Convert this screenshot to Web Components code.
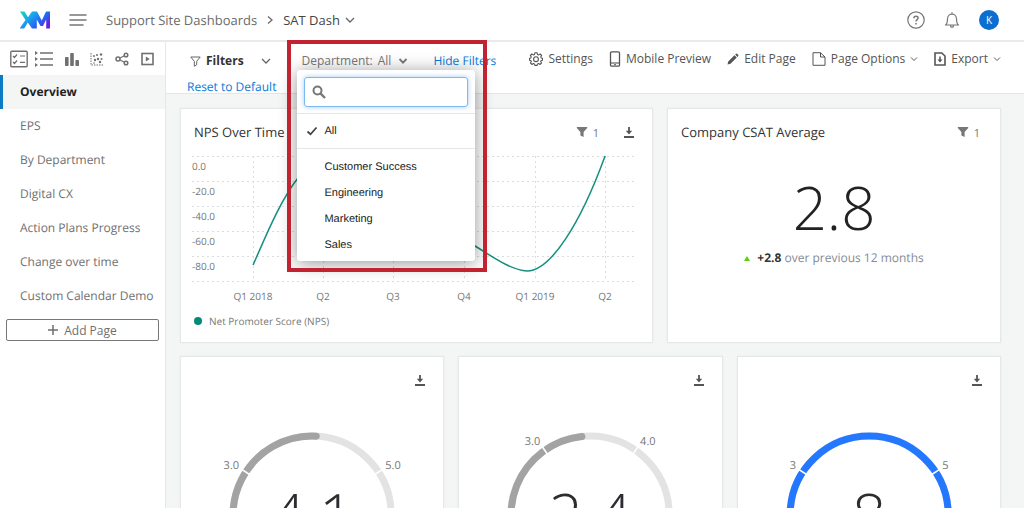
<!DOCTYPE html>
<html lang="en">
<head>
<meta charset="utf-8">
<meta name="viewport" content="width=device-width, initial-scale=1">
<title>SAT Dash</title>
<style>
  body { margin: 0; font-family: "Open Sans", sans-serif; font-size: 12px; color: #555; text-rendering: geometricPrecision; }
</style>
</head>
<body>
<dash-app></dash-app>

<template id="t-app">
  <style>
    :host { display: flex; flex-direction: column; height: 100vh; overflow: hidden; background: #f4f5f5; }
    .body { display: flex; flex: 1; min-height: 0; }
    main { flex: 1; min-width: 0; display: flex; flex-direction: column; }
    .cards { flex: 1; min-height: 0; overflow-y: auto; scrollbar-width: none; padding: 14px 23px 14px 14px; }
    .row { display: grid; gap: 14px; margin-bottom: 13px; }
    .wide { grid-template-columns: 17fr 12fr; }
    .three { grid-template-columns: repeat(3, 1fr); }
  </style>
  <dash-header></dash-header>
  <div class="body">
    <dash-sidebar></dash-sidebar>
    <main>
      <dash-toolbar></dash-toolbar>
      <div class="cards">
        <div class="row wide">
          <dash-card heading="NPS Over Time" filters="1" download><nps-chart></nps-chart></dash-card>
          <dash-card heading="Company CSAT Average" filters="1"><dash-metric></dash-metric></dash-card>
        </div>
        <div class="row three">
          <dash-card download><dash-gauge value="4.1" low="3.0" high="5.0" tick="57" end="3" color="#a3a3a3"></dash-gauge></dash-card>
          <dash-card download><dash-gauge value="2.4" low="3.0" high="4.0" tick="35" end="-6" color="#a3a3a3"></dash-gauge></dash-card>
          <dash-card download><dash-gauge value="8" low="3" high="5" tick="57" end="130" color="#2478ff"></dash-gauge></dash-card>
        </div>
      </div>
    </main>
  </div>
</template>

<template id="t-header">
  <style>
    :host { display: flex; align-items: center; height: 40px; padding: 0 25px 0 20px; background: #fff; border-bottom: 2px solid #e9eaea; flex: none; }
    .logo { display: block; width: 30px; height: 18px; margin-right: 19px; }
    button { border: 0; background: none; padding: 0; font: inherit; color: #777; display: flex; align-items: center; }
    nav { display: flex; align-items: center; margin-left: 19px; font-size: 13px; color: #6b6b6b; }
    nav a { color: inherit; text-decoration: none; }
    nav dash-icon { margin: 0 9px; }
    nav button { color: #444; }
    nav button dash-icon { margin: 0 0 0 5px; color: #666; }
    .right { margin-left: auto; display: flex; align-items: center; gap: 18px; }
    .avatar { width: 20px; height: 20px; border-radius: 50%; background: #0b6ed0; color: #fff; font-size: 10px; justify-content: center; }
  </style>
  <svg class="logo" viewBox="0 0 30 18" role="img" aria-label="XM">
    <defs><linearGradient id="g" x1="0" y1="0" x2="1" y2=".6">
      <stop offset="0" stop-color="#21dbaa"/><stop offset=".4" stop-color="#1aa6ee"/><stop offset=".75" stop-color="#2266f0"/><stop offset="1" stop-color="#6a1fe0"/>
    </linearGradient></defs>
    <path fill="url(#g)" d="M0 .5H4.500L8 6.300 12 .5H17L21.800 9.500 26 .5H30V17.500H26.200V8.500L23 15H20.500L16.800 8.500V17.500H12L7.800 11.500 4.200 17.500H-.5L5.500 9Z"/>
  </svg>
  <button aria-label="Menu"><dash-icon name="menu" w="18" h="14"></dash-icon></button>
  <nav aria-label="Breadcrumb">
    <a href="#">Support Site Dashboards</a>
    <dash-icon name="right" w="8" h="10"></dash-icon>
    <button>SAT Dash<dash-icon name="down" w="10" h="8"></dash-icon></button>
  </nav>
  <div class="right">
    <button aria-label="Help"><dash-icon name="help" w="18" h="18"></dash-icon></button>
    <button aria-label="Notifications"><dash-icon name="bell" w="18" h="18"></dash-icon></button>
    <button class="avatar" aria-label="Account">K</button>
  </div>
</template>

<template id="t-sidebar">
  <style>
    :host { display: block; width: 166px; flex: none; background: #fff; border-right: 1px solid #e6e7e7; box-sizing: border-box; color: #6f6f6f; }
    .tools { display: flex; align-items: center; justify-content: space-between; height: 33px; padding: 0 11px 0 10px; color: #707070; }
    .tools button { border: 0; background: none; padding: 0; color: inherit; display: flex; }
    .tools button:nth-child(2) { margin-left: -4px; }
    ul { list-style: none; margin: 0; padding: 0; }
    a { display: block; line-height: 34px; padding-left: 20px; color: inherit; text-decoration: none; }
    a[aria-current] { font-weight: 700; color: #222; background: #f4f5f5; border-left: 3px solid #0b7cc4; padding-left: 17px; }
    .add { display: flex; align-items: center; justify-content: center; gap: 6px; width: calc(100% - 12px); height: 22px; margin: 6px 6px 0; border: 1px solid #777; border-radius: 2px; background: #fff; font: inherit; color: inherit; padding: 0; }
  </style>
  <div class="tools">
    <button aria-label="Dashboards"><dash-icon name="checks" w="18" h="18"></dash-icon></button>
    <button aria-label="List"><dash-icon name="list" w="18" h="18"></dash-icon></button>
    <button aria-label="Bars"><dash-icon name="bars" w="16" h="16"></dash-icon></button>
    <button aria-label="Scatter"><dash-icon name="scatter" w="14" h="14"></dash-icon></button>
    <button aria-label="Share"><dash-icon name="share" w="14" h="14"></dash-icon></button>
    <button aria-label="Present"><dash-icon name="play" w="14" h="14"></dash-icon></button>
  </div>
  <nav><ul>
    <li><a href="#" aria-current="page">Overview</a></li>
    <li><a href="#">EPS</a></li>
    <li><a href="#">By Department</a></li>
    <li><a href="#">Digital CX</a></li>
    <li><a href="#">Action Plans Progress</a></li>
    <li><a href="#">Change over time</a></li>
    <li><a href="#">Custom Calendar Demo</a></li>
  </ul></nav>
  <button class="add"><dash-icon name="plus" w="10" h="10"></dash-icon>Add Page</button>
</template>

<template id="t-toolbar">
  <style>
    :host { display: flex; justify-content: space-between; height: 52px; padding: 6px 23px 0 21px; background: #fff; border-bottom: 1px solid #e4e5e5; box-sizing: border-box; position: relative; z-index: 1; flex: none; }
    button { border: 0; background: none; padding: 0; font: inherit; color: inherit; display: flex; align-items: center; white-space: nowrap; line-height: 26px; }
    .filters { display: grid; grid-template-columns: auto auto auto; column-gap: 25px; align-content: start; }
    .title { font-weight: 700; color: #333; }
    .title dash-icon { margin: 0 5px 0 3px; color: #666; }
    .title dash-icon:last-child { margin: 0 0 0 17px; }
    a { color: #0b78d8; text-decoration: none; line-height: 26px; white-space: nowrap; }
    .actions { display: flex; align-items: flex-start; gap: 16px; }
    .actions button { gap: 5px; line-height: 22px; }
  </style>
  <div class="filters">
    <button class="title"><dash-icon name="funnel" w="11" h="11"></dash-icon>Filters<dash-icon name="down" w="10" h="8"></dash-icon></button>
    <dash-filter></dash-filter>
    <a href="#">Hide Filters</a>
    <a href="#">Reset to Default</a>
  </div>
  <div class="actions">
    <button><dash-icon name="gear" w="14" h="14"></dash-icon>Settings</button>
    <button><dash-icon name="phone" w="12" h="16"></dash-icon>Mobile Preview</button>
    <button><dash-icon name="pencil" w="12" h="12"></dash-icon>Edit Page</button>
    <button><dash-icon name="page" w="14" h="14"></dash-icon>Page Options<dash-icon name="down" w="8" h="6"></dash-icon></button>
    <button><dash-icon name="export" w="12" h="14"></dash-icon>Export<dash-icon name="down" w="8" h="6"></dash-icon></button>
  </div>
</template>

<template id="t-filter">
  <style>
    :host { display: block; position: relative; color: #777; }
    .trigger { border: 0; background: none; padding: 0; font: inherit; color: inherit; display: flex; align-items: center; line-height: 26px; white-space: nowrap; }
    .trigger span { margin: 0 7px 0 5px; }
    .frame { position: absolute; left: -14px; top: -8px; width: 200px; height: 232px; box-sizing: border-box; border: 4px solid #c32230; pointer-events: none; }
    .menu { position: absolute; left: -4px; top: 22px; width: 178px; box-sizing: border-box; background: #fff; border-radius: 3px; box-shadow: 0 2px 18px rgba(0,0,0,.42); font-family: "Liberation Sans", Arial, sans-serif; font-size: 11px; color: #222; }
    .search { display: flex; align-items: center; gap: 6px; margin: 7px 7px 6px; height: 30px; box-sizing: border-box; padding: 0 7px; border: 1px solid #7db9ee; border-radius: 3px; box-shadow: 0 0 5px rgba(100,170,240,.6); color: #777; }
    input { flex: 1; min-width: 0; border: 0; outline: 0; background: none; font: inherit; padding: 0; }
    ul { list-style: none; margin: 0; padding: 4px 0; border-top: 1px solid #e6e6e6; }
    li { display: flex; align-items: center; padding-left: 27px; height: 26px; }
    .all li { padding-left: 9px; gap: 6px; }
    .rest { padding: 5px 0 3px; }
    .all dash-icon { color: #444; }
  </style>
  <button class="trigger" aria-haspopup="listbox" aria-expanded="true">Department: <span>All</span><dash-icon name="caret" w="10" h="8"></dash-icon></button>
  <div class="menu">
    <label class="search"><dash-icon name="search" w="14" h="14"></dash-icon><input type="text" aria-label="Search departments"></label>
    <ul class="all" role="listbox" aria-label="All departments"><li role="option" aria-selected="true"><dash-icon name="check" w="12" h="10"></dash-icon>All</li></ul>
    <ul class="rest" role="listbox" aria-label="Departments">
      <li role="option">Customer Success</li><li role="option">Engineering</li><li role="option">Marketing</li><li role="option">Sales</li>
    </ul>
  </div>
  <div class="frame"></div>
</template>

<template id="t-card">
  <style>
    :host { display: block; min-width: 0; background: #fff; border: 1px solid #e6e7e7; box-shadow: 0 0 2px rgba(0,0,0,.06); }
    header { display: flex; align-items: center; height: 46px; padding: 0 17px 0 13px; color: #777; }
    h2 { margin: 0; font-size: 13px; font-weight: 400; color: #333; flex: 1; white-space: nowrap; }
    .count, .dl { border: 0; background: none; padding: 0; font: inherit; font-size: 11px; color: inherit; display: flex; align-items: center; gap: 5px; }
    .count { margin-right: 3px; }
    .count + .dl { margin-left: 21px; }
    .dl { color: #555; }
  </style>
  <header><h2></h2></header>
  <slot></slot>
</template>

<template id="t-chart">
  <style>
    :host { display: block; padding-bottom: 5px; }
    svg { display: block; width: 100%; }
    text { font-size: 10px; fill: #777; }
    .legend { display: flex; align-items: center; gap: 7px; height: 32px; padding-left: 13px; font-size: 10px; color: #777; }
    i { width: 8px; height: 8px; border-radius: 50%; background: #048a79; }
  </style>
  <svg viewBox="0 0 471 150" role="img" aria-label="NPS over time">
    <g class="grid" stroke="#dcdcdc" stroke-dasharray="2 3"></g>
    <path fill="none" stroke="#15907f" stroke-width="1.500" d="M72 110C82 88 99 45 117 23S149 1 164 5C219 20 259 73 294 91C309 100 329 115 346 116C369 116 399 70 424 1"/>
  </svg>
  <div class="legend"><i></i>Net Promoter Score (NPS)</div>
</template>

<template id="t-metric">
  <style>
    :host { display: block; text-align: center; padding-top: 12px; }
    .big { font-size: 60px; font-weight: 300; line-height: 80px; color: #222; }
    p { margin: 0; line-height: 22px; color: #858b93; }
    b { color: #333; }
    .up { display: inline-block; border: 3px solid transparent; border-top: 0; border-bottom: 5px solid #5fce0c; margin-right: 7px; vertical-align: 1px; }
  </style>
  <div class="big">2.8</div>
  <p><span class="up"></span><b>+2.8</b> over previous 12 months</p>
</template>

<template id="t-gauge">
  <style>
    :host { display: block; }
    svg { display: block; width: 100%; }
    .value { font-size: 60px; font-weight: 300; fill: #2b2d30; text-anchor: middle; }
    .tick { font-size: 11px; fill: #777; }
    .low { text-anchor: end; }
  </style>
  <svg viewBox="0 0 262 210"></svg>
</template>

<script>
const ICONS = {
  menu: ['0 0 18 14', '<path d="M1 2H17M1 7H17M1 12H14" stroke-width="1.600" stroke-linecap="round"/>'],
  right: ['0 0 8 10', '<path d="M2 1.500 6 5 2 8.500" stroke-width="1.300"/>'],
  down: ['0 0 10 8', '<path d="M1 2 5 6 9 2" stroke-width="1.300"/>'],
  caret: ['0 0 10 8', '<path d="M1.500 2 5 5.600 8.500 2" stroke-width="1.800"/>'],
  help: ['0 0 18 18', '<circle cx="9" cy="9" r="8.200" stroke-width="1.200"/><path d="M6.900 7.200C6.900 4.600 11.100 4.600 11.100 7.100 11.100 8.700 9 8.700 9 10.500M9 12V13.500" stroke-width="1.500"/>'],
  bell: ['0 0 18 18', '<path d="M2.500 14C4.500 12.500 4.500 10.500 4.500 8 4.500 1.500 13.500 1.500 13.500 8 13.500 10.500 13.500 12.500 15.500 14ZM7.500 14C7.500 17 10.500 17 10.500 14M9 3V1.300" stroke-width="1.200" stroke-linejoin="round"/>'],
  checks: ['0 0 18 18', '<rect x=".8" y="1.300" width="16.400" height="15.400" rx="1" stroke-width="1.400"/><path d="M3 6 4.500 7.500 7 4.500M3 12 4.500 13.500 7 10.500M10 6H15M10 12.300H15" stroke-width="1.200"/>'],
  list: ['0 0 18 18', '<path d="M5 3H18M5 9H18M5 15H18" stroke-width="1.500"/><path d="M0 1 3 3 0 5ZM0 7 3 9 0 11ZM0 13 3 15 0 17Z" fill="currentColor" stroke="none"/>'],
  bars: ['0 0 16 16', '<g fill="currentColor" stroke="none"><rect x="1" y="6" width="3.600" height="9" rx=".8"/><rect x="6.200" y="2" width="3.600" height="13" rx=".8"/><rect x="11.400" y="9" width="3.600" height="6" rx=".8"/></g>'],
  scatter: ['0 0 14 14', '<path d="M1 1V13H13.500" stroke-dasharray="1.500 1"/><g fill="currentColor" stroke="none"><circle cx="4" cy="4" r="1"/><circle cx="7" cy="3" r="1"/><circle cx="11" cy="2.500" r="1.200"/><circle cx="5" cy="8" r="1.200"/><circle cx="8" cy="7" r="1.200"/><circle cx="11.500" cy="7" r="1"/><circle cx="10" cy="10" r="1.200"/><circle cx="4" cy="11" r=".8"/></g>'],
  share: ['0 0 14 14', '<path d="M3 7 11 3M3 7 11 11" stroke-width="1.300"/><g fill="#fff" stroke-width="1.500"><circle cx="3" cy="7" r="2"/><circle cx="11" cy="3" r="1.800"/><circle cx="11" cy="11" r="1.800"/></g>'],
  play: ['0 0 14 14', '<rect x="2" y="1.500" width="11" height="11" stroke-width="1.600"/><path d="M5.800 4.500 9.800 7 5.800 9.500Z" fill="currentColor" stroke="none"/>'],
  plus: ['0 0 10 10', '<path d="M5 0V10M0 5H10" stroke-width="1.500"/>'],
  funnel: ['0 0 11 11', '<path d="M.8 1H10.200L6.700 5.300V8.800L4.300 10.300V5.300Z" stroke-width="1" stroke-linejoin="round"/>'],
  funnelsolid: ['0 0 12 12', '<path d="M.8 1H11.200V2L7.600 6V11L4.400 9.500V6L.8 2Z" fill="currentColor" stroke="none"/>'],
  gear: ['0 0 14 14', '<path stroke-width="1.100" stroke-linejoin="round" d="M5.900.8H8.100L8.500 2.400 9.700 2.900 11.200 2 12.600 3.500 11.800 4.900 12.200 6 13.500 6.300V8.200L12.200 8.500 11.700 9.600 12.500 11 11.100 12.400 9.700 11.600 8.500 12.100 8.100 13.400H5.900L5.500 12.100 4.300 11.600 2.900 12.400 1.500 11 2.300 9.600 1.800 8.500.5 8.200V6.300L1.800 6 2.200 4.900 1.400 3.500 2.800 2 4.300 2.900 5.500 2.400Z"/><circle cx="7" cy="7.200" r="2.400" stroke-width="1.100"/>'],
  phone: ['0 0 12 16', '<rect x="1.500" y=".8" width="9" height="14.400" rx="1.200" stroke-width="1.300"/><path d="M1.500 12H10.500" stroke-width="1.100"/><path d="M5 13.700H7"/>'],
  pencil: ['0 0 12 12', '<path d="M.5 11.500 1.200 8.500 7.500 2.300 9.800 4.600 3.500 10.800ZM8.200 1.600 9.200.7Q9.700.3 10.200.8L11.300 1.900Q11.800 2.400 11.300 2.900L10.400 3.900Z" fill="currentColor" stroke="none"/>'],
  page: ['0 0 14 14', '<path d="M1 .7H8.500L13 5V13.300H1ZM8.500.7V5H13"/>'],
  export: ['0 0 12 14', '<path d="M1 1H7.800L11 4V13H1Z" stroke-width="1.600"/><path d="M6 4.500V9" stroke-width="1.500"/><path d="M3.500 7.500H8.500L6 10.500Z" fill="currentColor" stroke="none"/>'],
  search: ['0 0 14 14', '<circle cx="5.500" cy="5.500" r="4" stroke-width="2"/><path d="M8.500 8.500 13 13" stroke-width="2.400"/>'],
  check: ['0 0 12 10', '<path d="M1.500 5.500 4.500 8.300 10.500 1.500" stroke-width="1.800"/>'],
  download: ['0 0 12 12', '<path d="M6 1V6M1 11H11" stroke-width="1.800"/><path d="M2.800 4.800H9.200L6 8.500Z" fill="currentColor" stroke="none"/>'],
};

class DashIcon extends HTMLElement {
  constructor() { super(); this.attachShadow({ mode: 'open' }); }
  connectedCallback() {
    const [box, art] = ICONS[this.getAttribute('name')];
    const w = this.getAttribute('w'), h = this.getAttribute('h');
    this.shadowRoot.innerHTML = `<style>:host{display:inline-flex;flex:none}svg{display:block}</style>
      <svg width="${w}" height="${h}" viewBox="${box}" fill="none" stroke="currentColor" aria-hidden="true">${art}</svg>`;
  }
}
customElements.define('dash-icon', DashIcon);

class TemplateElement extends HTMLElement {
  constructor() {
    super();
    this.attachShadow({ mode: 'open' })
      .append(document.getElementById(this.constructor.template).content.cloneNode(true));
  }
}
const define = (name, template) =>
  customElements.define(name, class extends TemplateElement { static template = template; });

class DashCard extends TemplateElement {
  static template = 't-card';
  connectedCallback() {
    const header = this.shadowRoot.querySelector('header');
    header.querySelector('h2').textContent = this.getAttribute('heading') || '';
    if (this.hasAttribute('filters')) header.insertAdjacentHTML('beforeend',
      `<button class="count" aria-label="Filters applied"><dash-icon name="funnelsolid" w="12" h="12"></dash-icon>${this.getAttribute('filters')}</button>`);
    if (this.hasAttribute('download')) header.insertAdjacentHTML('beforeend',
      '<button class="dl" aria-label="Download"><dash-icon name="download" w="12" h="12"></dash-icon></button>');
  }
}
customElements.define('dash-card', DashCard);

class NpsChart extends TemplateElement {
  static template = 't-chart';
  connectedCallback() {
    const svg = this.shadowRoot.querySelector('svg');
    const xs = [72, 142, 212, 283, 354, 424];
    const xLabels = ['Q1 2018', 'Q2', 'Q3', 'Q4', 'Q1 2019', 'Q2'];
    const yLabels = ['0.0', '-20.0', '-40.0', '-60.0', '-80.0'];
    let lines = '', labels = '';
    for (let i = 0; i < 6; i++) lines += `<path d="M11 ${1.5 + i * 25}H456"/><path d="M${xs[i] + .5} 1V126"/>`;
    xLabels.forEach((t, i) => labels += `<text x="${xs[i]}" y="145" text-anchor="middle">${t}</text>`);
    yLabels.forEach((t, i) => labels += `<text x="11" y="${15 + i * 25}">${t}</text>`);
    svg.querySelector('.grid').innerHTML = lines;
    svg.insertAdjacentHTML('beforeend', labels);
  }
}
customElements.define('nps-chart', NpsChart);

class DashGauge extends TemplateElement {
  static template = 't-gauge';
  connectedCallback() {
    const get = n => this.getAttribute(n);
    const cx = 131, cy = 112, r = 79;
    // Angles are in degrees, clockwise from twelve o'clock.
    const at = (deg, rad) => {
      const a = deg * Math.PI / 180;
      return [(cx + rad * Math.sin(a)).toFixed(1), (cy - rad * Math.cos(a)).toFixed(1)];
    };
    const arc = (from, to) => `M${at(from, r)}A${r} ${r} 0 ${to - from > 180 ? 1 : 0} 1 ${at(to, r)}`;
    const tick = +get('tick'), end = +get('end');
    const mark = d => `<path d="M${at(d, r - 5)}L${at(d, r + 5)}" stroke="#fff" stroke-width="1.600"/>`;
    const [lx, ly] = at(-tick, 87), [hx, hy] = at(tick, 87);
    this.shadowRoot.querySelector('svg').innerHTML = `
      <g fill="none" stroke-width="7">
        <path d="${arc(-130, 130)}" stroke="#e3e3e3"/>
        <path d="${arc(-130, end)}" stroke="${get('color')}" stroke-linecap="round"/>
        ${mark(-tick)}${mark(tick)}
      </g>
      <text class="tick low" x="${lx}" y="${+ly + 1}">${get('low')}</text>
      <text class="tick" x="${hx}" y="${+hy + 1}">${get('high')}</text>
      <text class="value" x="${cx}" y="134">${get('value')}</text>`;
  }
}
customElements.define('dash-gauge', DashGauge);

define('dash-metric', 't-metric');
define('dash-filter', 't-filter');
define('dash-toolbar', 't-toolbar');
define('dash-sidebar', 't-sidebar');
define('dash-header', 't-header');
define('dash-app', 't-app');
</script>
</body>
</html>
